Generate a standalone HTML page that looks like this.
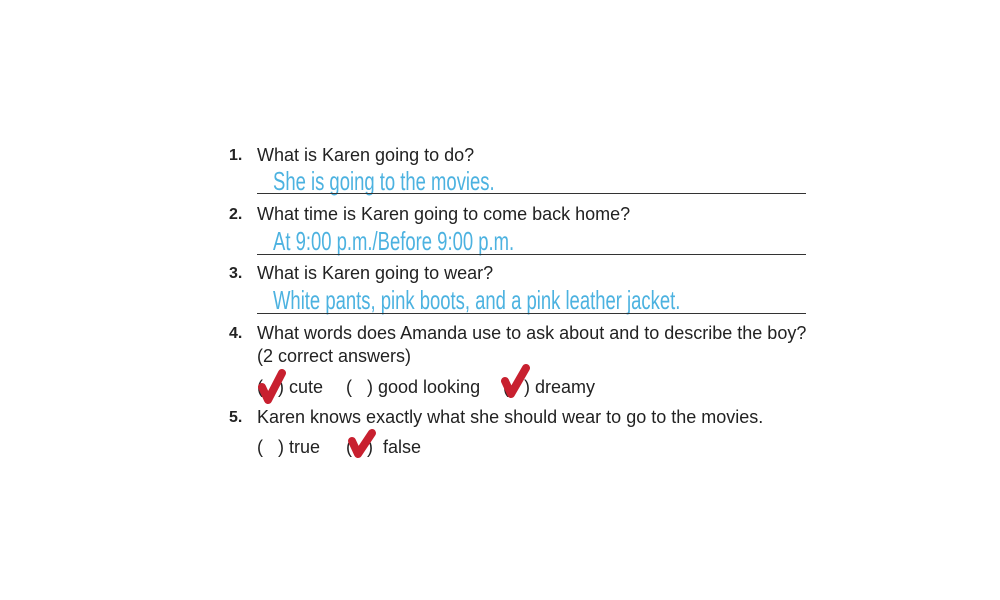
<!DOCTYPE html><html><head><style>
body{margin:0;width:1000px;height:600px;background:#fff;position:relative;overflow:hidden;font-family:"Liberation Sans",sans-serif;color:#222}
.t{position:absolute;font-size:18px;white-space:nowrap;line-height:1}
.n{position:absolute;font-size:16px;font-weight:bold;line-height:1}
.l{position:absolute;left:257px;width:549px;height:0;border-top:1.5px solid #333}
.b{position:absolute;font-size:26px;color:#4cb2e0;white-space:nowrap;line-height:1;transform:scaleX(0.71);transform-origin:left}
svg{position:absolute}
</style></head><body>
<div class="n" style="left:229px;top:148px">1.</div>
<div class="t" style="left:257px;top:146px">What is Karen going to do?</div>
<div class="b" style="left:273px;top:168px">She is going to the movies.</div>
<div class="l" style="top:193px"></div>
<div class="n" style="left:229px;top:207px">2.</div>
<div class="t" style="left:257px;top:205px">What time is Karen going to come back home?</div>
<div class="b" style="left:273px;top:228px">At 9:00 p.m./Before 9:00 p.m.</div>
<div class="l" style="top:254px"></div>
<div class="n" style="left:229px;top:266px">3.</div>
<div class="t" style="left:257px;top:264px">What is Karen going to wear?</div>
<div class="b" style="left:273px;top:287px">White pants, pink boots, and a pink leather jacket.</div>
<div class="l" style="top:313px"></div>
<div class="n" style="left:229px;top:326px">4.</div>
<div class="t" style="left:257px;top:324px">What words does Amanda use to ask about and to describe the boy?</div>
<div class="t" style="left:257px;top:347px">(2 correct answers)</div>
<div class="t" style="left:257px;top:378px">(&nbsp;&nbsp;&nbsp;) cute</div>
<div class="t" style="left:346px;top:378px">(&nbsp;&nbsp;&nbsp;) good looking</div>
<div class="t" style="left:503px;top:378px">(&nbsp;&nbsp;&nbsp;) dreamy</div>
<div class="n" style="left:229px;top:410px">5.</div>
<div class="t" style="left:257px;top:408px">Karen knows exactly what she should wear to go to the movies.</div>
<div class="t" style="left:257px;top:438px">(&nbsp;&nbsp;&nbsp;) true</div>
<div class="t" style="left:346px;top:438px">(&nbsp;&nbsp;&nbsp;)&nbsp; false</div>
<svg style="left:0;top:0" width="1000" height="600"><g fill="none" stroke="#c8202f" stroke-width="8" stroke-linecap="round" stroke-linejoin="round">
<path d="M262 387 L268 400 L282 373"/>
<path d="M505 381 L511 394 L526 368"/>
<path d="M352 441 L358 454 L372 433"/>
</g></svg>
</body></html>
